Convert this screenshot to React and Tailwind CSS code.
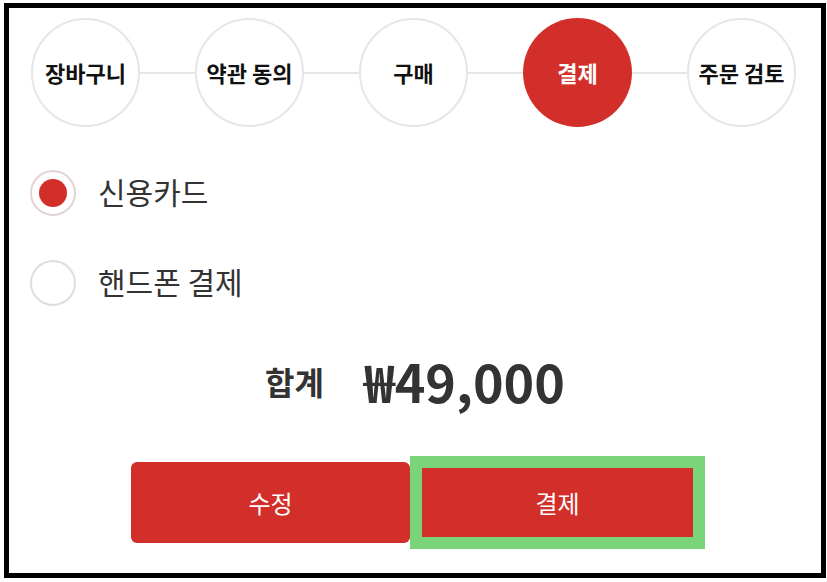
const FONT = { fontFamily: '"Noto Sans CJK KR", "Noto Sans", sans-serif' };

const steps = ["장바구니", "약관 동의", "구매", "결제", "주문 검토"];
const current = 3;

function StepCircle({ label, active }) {
  return (
    <div
      className={
        "w-[109px] h-[109px] shrink-0 rounded-full flex items-center justify-center text-[22px] font-bold " +
        (active
          ? "bg-[#d32f2a] text-white"
          : "bg-white border-2 border-[#e6e6e6] text-[#111]")
      }
    >
      {label}
    </div>
  );
}

function Radio({ checked, label }) {
  return (
    <label className="flex items-center gap-[22px]">
      <span
        className={
          "w-[46px] h-[46px] rounded-full border-2 flex items-center justify-center " +
          (checked ? "border-[#e3d3d3]" : "border-[#dedede]")
        }
      >
        {checked && <span className="w-[28px] h-[28px] rounded-full bg-[#d32f2a]" />}
      </span>
      <span className="text-[30px] text-[#333] -mt-[4px]">{label}</span>
    </label>
  );
}

export default function App() {
  return (
    <div className="w-[827px] h-[582px] bg-white pt-[3px] pl-[4px]" style={FONT}>
      <div className="w-[822px] h-[575px] border-[5px] border-black flex flex-col">
        {/* progress steps */}
        <div className="flex items-center ml-[22px] mt-[10px]">
          {steps.map((s, i) => (
            <div key={s} className="flex items-center">
              {i > 0 && <div className="w-[55px] h-[2px] bg-[#e6e6e6]" />}
              <StepCircle label={s} active={i === current} />
            </div>
          ))}
        </div>

        {/* payment methods */}
        <div className="flex flex-col gap-[44px] ml-[21px] mt-[43px]">
          <Radio checked label="신용카드" />
          <Radio label="핸드폰 결제" />
        </div>

        {/* total */}
        <div className="flex items-center justify-center gap-[40px] mt-[36px] text-[#333] font-bold">
          <span className="text-[32px]">합계</span>
          <span className="text-[52px]">₩49,000</span>
        </div>

        {/* actions */}
        <div className="flex items-center ml-[122px] mt-[36px]">
          <button className="w-[279px] h-[81px] rounded-[6px] bg-[#d32f2a] text-white text-[24px]">
            수정
          </button>
          <button className="w-[295px] h-[93px] border-[12px] border-[#7ad47a] bg-[#d32f2a] text-white text-[24px]">
            결제
          </button>
        </div>
      </div>
    </div>
  );
}
